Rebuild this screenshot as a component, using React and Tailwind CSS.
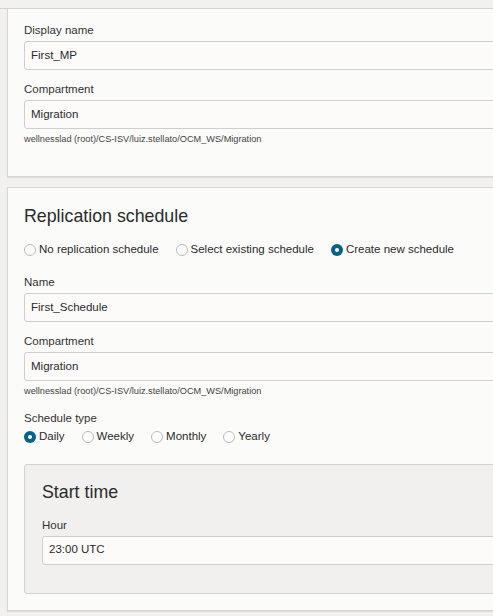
import React from "react";

function Radio({ label, checked }) {
  return (
    <label className="flex items-center gap-[3px]">
      {checked ? (
        <span className="w-[12px] h-[12px] rounded-full bg-[#04628f] flex items-center justify-center">
          <span className="w-[4px] h-[4px] rounded-full bg-white" />
        </span>
      ) : (
        <span className="w-[12px] h-[12px] rounded-full border border-[#b9b9b9] bg-white" />
      )}
      <span>{label}</span>
    </label>
  );
}

function Field({ label, value, hint }) {
  return (
    <div>
      <div className="text-[11.5px] leading-[14px] text-[#333] mb-[4px]">{label}</div>
      <div className="h-[29px] border border-[#cfcfcf] rounded-[3px] bg-[#fcfbfa] flex items-center px-[6px] text-[11.5px] text-[#2b2b2b]">
        {value}
      </div>
      {hint && (
        <div className="text-[9.2px] leading-[11px] text-[#444] mt-[5px]">{hint}</div>
      )}
    </div>
  );
}

const path = "wellnesslad (root)/CS-ISV/luiz.stellato/OCM_WS/Migration";

export default function App() {
  return (
    <div
      className="w-[493px] h-[616px] overflow-hidden bg-[#f2f1ef] pt-[8px] pl-[7px]"
      style={{ fontFamily: "'Liberation Sans', Arial, sans-serif" }}
    >
      <div className="border-t border-[#d3d3d3] -ml-[7px] pl-[7px]">
        <div className="w-[520px] h-[168px] bg-[#fbfbfa] border-l border-b border-[#d6d6d6] shadow-[0_1px_1px_rgba(0,0,0,0.08)] pl-[16px] pr-[8px] pt-[14px] flex flex-col gap-[12px]">
          <Field label="Display name" value="First_MP" />
          <Field label="Compartment" value="Migration" hint={path} />
        </div>
      </div>

      <div className="mt-[10px] w-[520px] h-[424px] bg-[#fbfbfa] border-l border-t border-b border-[#d6d6d6] shadow-[0_1px_1px_rgba(0,0,0,0.08)] pl-[16px] pt-[18px]">
        <h2 className="text-[17.8px] leading-[20px] text-[#2b2b2b]">Replication schedule</h2>
        <div className="flex items-center gap-[17px] text-[11.5px] text-[#2b2b2b] mt-[15px]">
          <Radio label="No replication schedule" />
          <Radio label="Select existing schedule" />
          <Radio label="Create new schedule" checked />
        </div>
        <div className="mt-[17px] flex flex-col gap-[12px]">
          <Field label="Name" value="First_Schedule" />
          <Field label="Compartment" value="Migration" hint={path} />
        </div>
        <div className="mt-[14px] text-[11.5px] leading-[14px] text-[#333]">Schedule type</div>
        <div className="flex items-center gap-[17px] text-[11.5px] text-[#2b2b2b] mt-[3px]">
          <Radio label="Daily" checked />
          <Radio label="Weekly" />
          <Radio label="Monthly" />
          <Radio label="Yearly" />
        </div>
        <div className="mt-[18px] h-[130px] bg-[#f1f0ee] border border-[#d2d2d2] rounded-[3px] pl-[17px] pt-[17px]">
          <h3 className="text-[17.8px] leading-[20px] text-[#2b2b2b]">Start time</h3>
          <div className="mt-[16px]">
            <Field label="Hour" value="23:00 UTC" />
          </div>
        </div>
      </div>
    </div>
  );
}
